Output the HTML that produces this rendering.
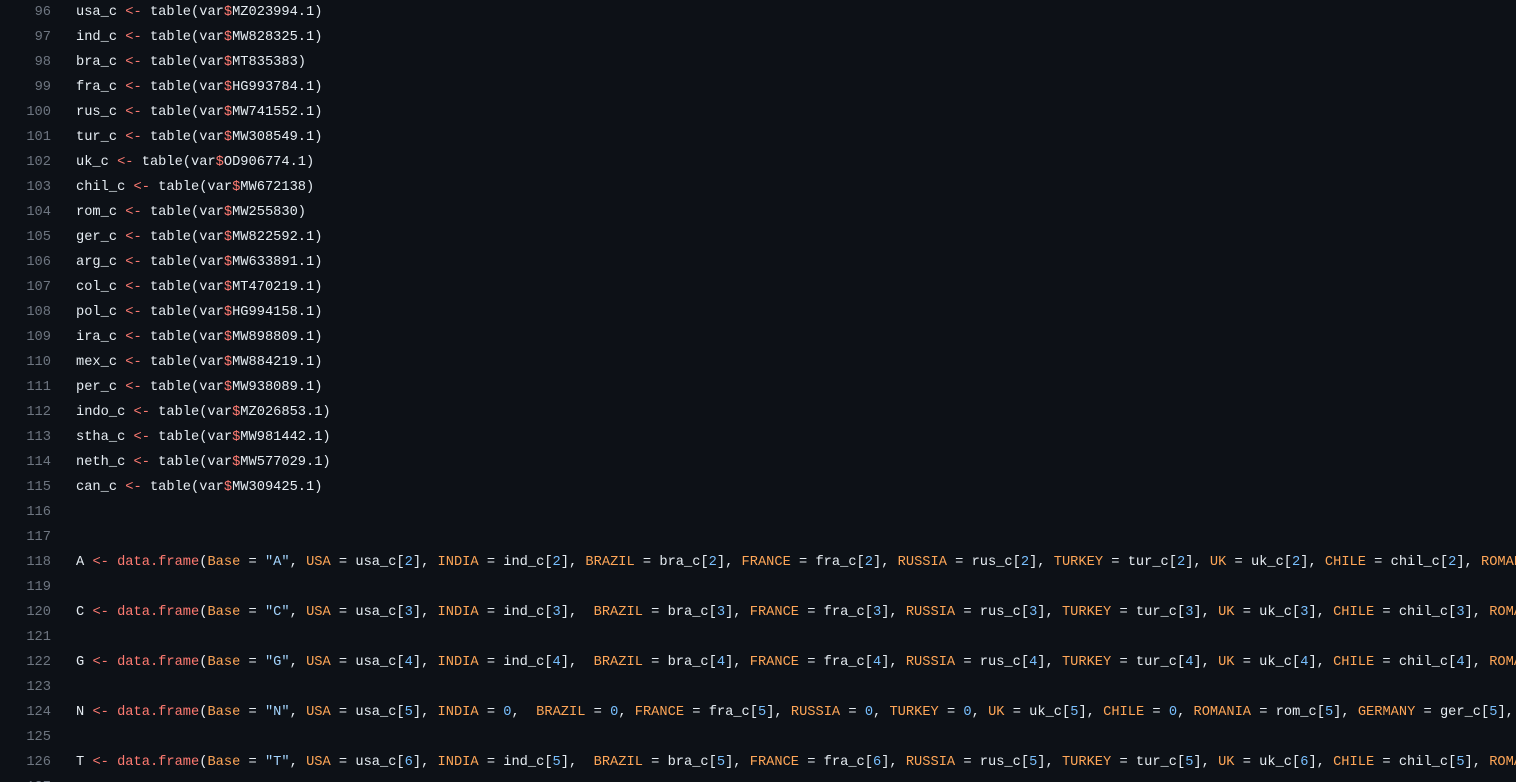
<!DOCTYPE html>
<html><head><meta charset="utf-8"><style>
html,body{margin:0;background:#0d1117;width:1516px;height:782px;overflow:hidden}
.c{font-family:"Liberation Mono",monospace;font-size:13.7px;color:#e6edf3}
.l{height:25px;line-height:25px;display:flex;white-space:pre}
.n{width:51px;text-align:right;color:#6e7681;padding-right:25px;flex:none}
.k{color:#ff7b72}.o{color:#ffa657}.b{color:#79c0ff}.s{color:#a5d6ff}
</style></head><body><div class="c">
<div class="l"><span class="n">96</span><span>usa_c <span class="k">&lt;-</span> table(var<span class="k">$</span>MZ023994.1)</span></div>
<div class="l"><span class="n">97</span><span>ind_c <span class="k">&lt;-</span> table(var<span class="k">$</span>MW828325.1)</span></div>
<div class="l"><span class="n">98</span><span>bra_c <span class="k">&lt;-</span> table(var<span class="k">$</span>MT835383)</span></div>
<div class="l"><span class="n">99</span><span>fra_c <span class="k">&lt;-</span> table(var<span class="k">$</span>HG993784.1)</span></div>
<div class="l"><span class="n">100</span><span>rus_c <span class="k">&lt;-</span> table(var<span class="k">$</span>MW741552.1)</span></div>
<div class="l"><span class="n">101</span><span>tur_c <span class="k">&lt;-</span> table(var<span class="k">$</span>MW308549.1)</span></div>
<div class="l"><span class="n">102</span><span>uk_c <span class="k">&lt;-</span> table(var<span class="k">$</span>OD906774.1)</span></div>
<div class="l"><span class="n">103</span><span>chil_c <span class="k">&lt;-</span> table(var<span class="k">$</span>MW672138)</span></div>
<div class="l"><span class="n">104</span><span>rom_c <span class="k">&lt;-</span> table(var<span class="k">$</span>MW255830)</span></div>
<div class="l"><span class="n">105</span><span>ger_c <span class="k">&lt;-</span> table(var<span class="k">$</span>MW822592.1)</span></div>
<div class="l"><span class="n">106</span><span>arg_c <span class="k">&lt;-</span> table(var<span class="k">$</span>MW633891.1)</span></div>
<div class="l"><span class="n">107</span><span>col_c <span class="k">&lt;-</span> table(var<span class="k">$</span>MT470219.1)</span></div>
<div class="l"><span class="n">108</span><span>pol_c <span class="k">&lt;-</span> table(var<span class="k">$</span>HG994158.1)</span></div>
<div class="l"><span class="n">109</span><span>ira_c <span class="k">&lt;-</span> table(var<span class="k">$</span>MW898809.1)</span></div>
<div class="l"><span class="n">110</span><span>mex_c <span class="k">&lt;-</span> table(var<span class="k">$</span>MW884219.1)</span></div>
<div class="l"><span class="n">111</span><span>per_c <span class="k">&lt;-</span> table(var<span class="k">$</span>MW938089.1)</span></div>
<div class="l"><span class="n">112</span><span>indo_c <span class="k">&lt;-</span> table(var<span class="k">$</span>MZ026853.1)</span></div>
<div class="l"><span class="n">113</span><span>stha_c <span class="k">&lt;-</span> table(var<span class="k">$</span>MW981442.1)</span></div>
<div class="l"><span class="n">114</span><span>neth_c <span class="k">&lt;-</span> table(var<span class="k">$</span>MW577029.1)</span></div>
<div class="l"><span class="n">115</span><span>can_c <span class="k">&lt;-</span> table(var<span class="k">$</span>MW309425.1)</span></div>
<div class="l"><span class="n">116</span><span></span></div>
<div class="l"><span class="n">117</span><span></span></div>
<div class="l"><span class="n">118</span><span>A <span class="k">&lt;-</span> <span class="k">data.frame</span>(<span class="o">Base</span> = <span class="s">"A"</span>, <span class="o">USA</span> = usa_c[<span class="b">2</span>], <span class="o">INDIA</span> = ind_c[<span class="b">2</span>], <span class="o">BRAZIL</span> = bra_c[<span class="b">2</span>], <span class="o">FRANCE</span> = fra_c[<span class="b">2</span>], <span class="o">RUSSIA</span> = rus_c[<span class="b">2</span>], <span class="o">TURKEY</span> = tur_c[<span class="b">2</span>], <span class="o">UK</span> = uk_c[<span class="b">2</span>], <span class="o">CHILE</span> = chil_c[<span class="b">2</span>], <span class="o">ROMANIA</span> = rom_c[<span class="b">2</span>])</span></div>
<div class="l"><span class="n">119</span><span></span></div>
<div class="l"><span class="n">120</span><span>C <span class="k">&lt;-</span> <span class="k">data.frame</span>(<span class="o">Base</span> = <span class="s">"C"</span>, <span class="o">USA</span> = usa_c[<span class="b">3</span>], <span class="o">INDIA</span> = ind_c[<span class="b">3</span>],  <span class="o">BRAZIL</span> = bra_c[<span class="b">3</span>], <span class="o">FRANCE</span> = fra_c[<span class="b">3</span>], <span class="o">RUSSIA</span> = rus_c[<span class="b">3</span>], <span class="o">TURKEY</span> = tur_c[<span class="b">3</span>], <span class="o">UK</span> = uk_c[<span class="b">3</span>], <span class="o">CHILE</span> = chil_c[<span class="b">3</span>], <span class="o">ROMANIA</span> = rom_c[<span class="b">3</span>])</span></div>
<div class="l"><span class="n">121</span><span></span></div>
<div class="l"><span class="n">122</span><span>G <span class="k">&lt;-</span> <span class="k">data.frame</span>(<span class="o">Base</span> = <span class="s">"G"</span>, <span class="o">USA</span> = usa_c[<span class="b">4</span>], <span class="o">INDIA</span> = ind_c[<span class="b">4</span>],  <span class="o">BRAZIL</span> = bra_c[<span class="b">4</span>], <span class="o">FRANCE</span> = fra_c[<span class="b">4</span>], <span class="o">RUSSIA</span> = rus_c[<span class="b">4</span>], <span class="o">TURKEY</span> = tur_c[<span class="b">4</span>], <span class="o">UK</span> = uk_c[<span class="b">4</span>], <span class="o">CHILE</span> = chil_c[<span class="b">4</span>], <span class="o">ROMANIA</span> = rom_c[<span class="b">4</span>])</span></div>
<div class="l"><span class="n">123</span><span></span></div>
<div class="l"><span class="n">124</span><span>N <span class="k">&lt;-</span> <span class="k">data.frame</span>(<span class="o">Base</span> = <span class="s">"N"</span>, <span class="o">USA</span> = usa_c[<span class="b">5</span>], <span class="o">INDIA</span> = <span class="b">0</span>,  <span class="o">BRAZIL</span> = <span class="b">0</span>, <span class="o">FRANCE</span> = fra_c[<span class="b">5</span>], <span class="o">RUSSIA</span> = <span class="b">0</span>, <span class="o">TURKEY</span> = <span class="b">0</span>, <span class="o">UK</span> = uk_c[<span class="b">5</span>], <span class="o">CHILE</span> = <span class="b">0</span>, <span class="o">ROMANIA</span> = rom_c[<span class="b">5</span>], <span class="o">GERMANY</span> = ger_c[<span class="b">5</span>], <span class="o">ARGENTINA</span> = <span class="b">0</span>)</span></div>
<div class="l"><span class="n">125</span><span></span></div>
<div class="l"><span class="n">126</span><span>T <span class="k">&lt;-</span> <span class="k">data.frame</span>(<span class="o">Base</span> = <span class="s">"T"</span>, <span class="o">USA</span> = usa_c[<span class="b">6</span>], <span class="o">INDIA</span> = ind_c[<span class="b">5</span>],  <span class="o">BRAZIL</span> = bra_c[<span class="b">5</span>], <span class="o">FRANCE</span> = fra_c[<span class="b">6</span>], <span class="o">RUSSIA</span> = rus_c[<span class="b">5</span>], <span class="o">TURKEY</span> = tur_c[<span class="b">5</span>], <span class="o">UK</span> = uk_c[<span class="b">6</span>], <span class="o">CHILE</span> = chil_c[<span class="b">5</span>], <span class="o">ROMANIA</span> = rom_c[<span class="b">6</span>])</span></div>
<div class="l"><span class="n">127</span><span></span></div>
</div></body></html>
